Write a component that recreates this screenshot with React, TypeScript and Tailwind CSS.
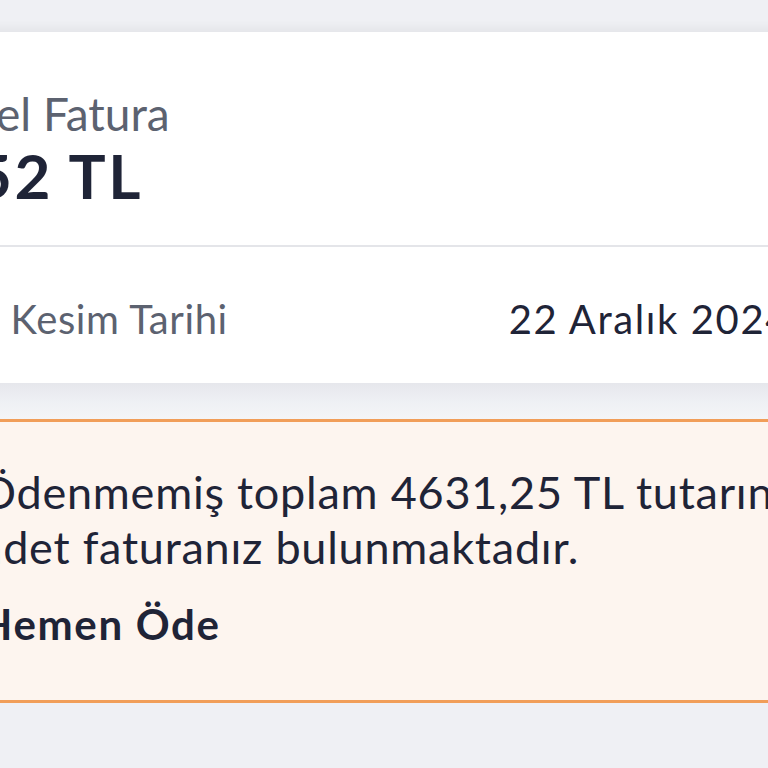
export default function App() {
  return (
    <main
      className="w-[768px] h-[768px] overflow-hidden bg-[#eff0f4] text-[#1f2437]"
      style={{ fontFamily: "Lato, 'Noto Sans', sans-serif" }}
    >
      <div className="ml-[-140px] w-[1000px] pt-[32px]">
        <section className="bg-white shadow-[0_-6px_8px_rgba(0,0,0,0.04)]">
          <div className="pl-[30px] pt-[56px] pb-[35px] border-b-2 border-[#e4e5e9]">
            <p className="text-[46px] leading-[52px] text-[#5c6270]">Güncel Fatura</p>
            <p className="-ml-2 text-[62px] leading-[70px] font-bold tracking-[0.04em]">1.252 TL</p>
          </div>
          <div className="h-[136px] pt-[8px] pl-[30px] pr-[70px] flex items-center justify-between">
            <span className="-ml-1 text-[40px] tracking-[0.015em] text-[#5c6270]">Fatura Kesim Tarihi</span>
            <span className="text-[40px] tracking-[0.04em]">22 Aralık 2024</span>
          </div>
        </section>
        <div className="h-[36px] bg-gradient-to-b from-[#e6e7ec] via-[#eef0f4] to-[#f4f5f7]" />
        <section className="bg-[#fdf5ef] border-y-[3px] border-[#f19e59] pl-[120px] pt-[43px] pb-[50px]">
          <p className="text-[45px] leading-[55px] tracking-[0.017em] whitespace-nowrap">
            Ödenmemiş toplam 4631,25 TL tutarında 1
            <br />
            adet faturanız bulunmaktadır.
          </p>
          <button className="mt-[23px] text-[42px] leading-[52px] font-bold tracking-[0.04em]">Hemen Öde</button>
        </section>
      </div>
    </main>
  );
}
